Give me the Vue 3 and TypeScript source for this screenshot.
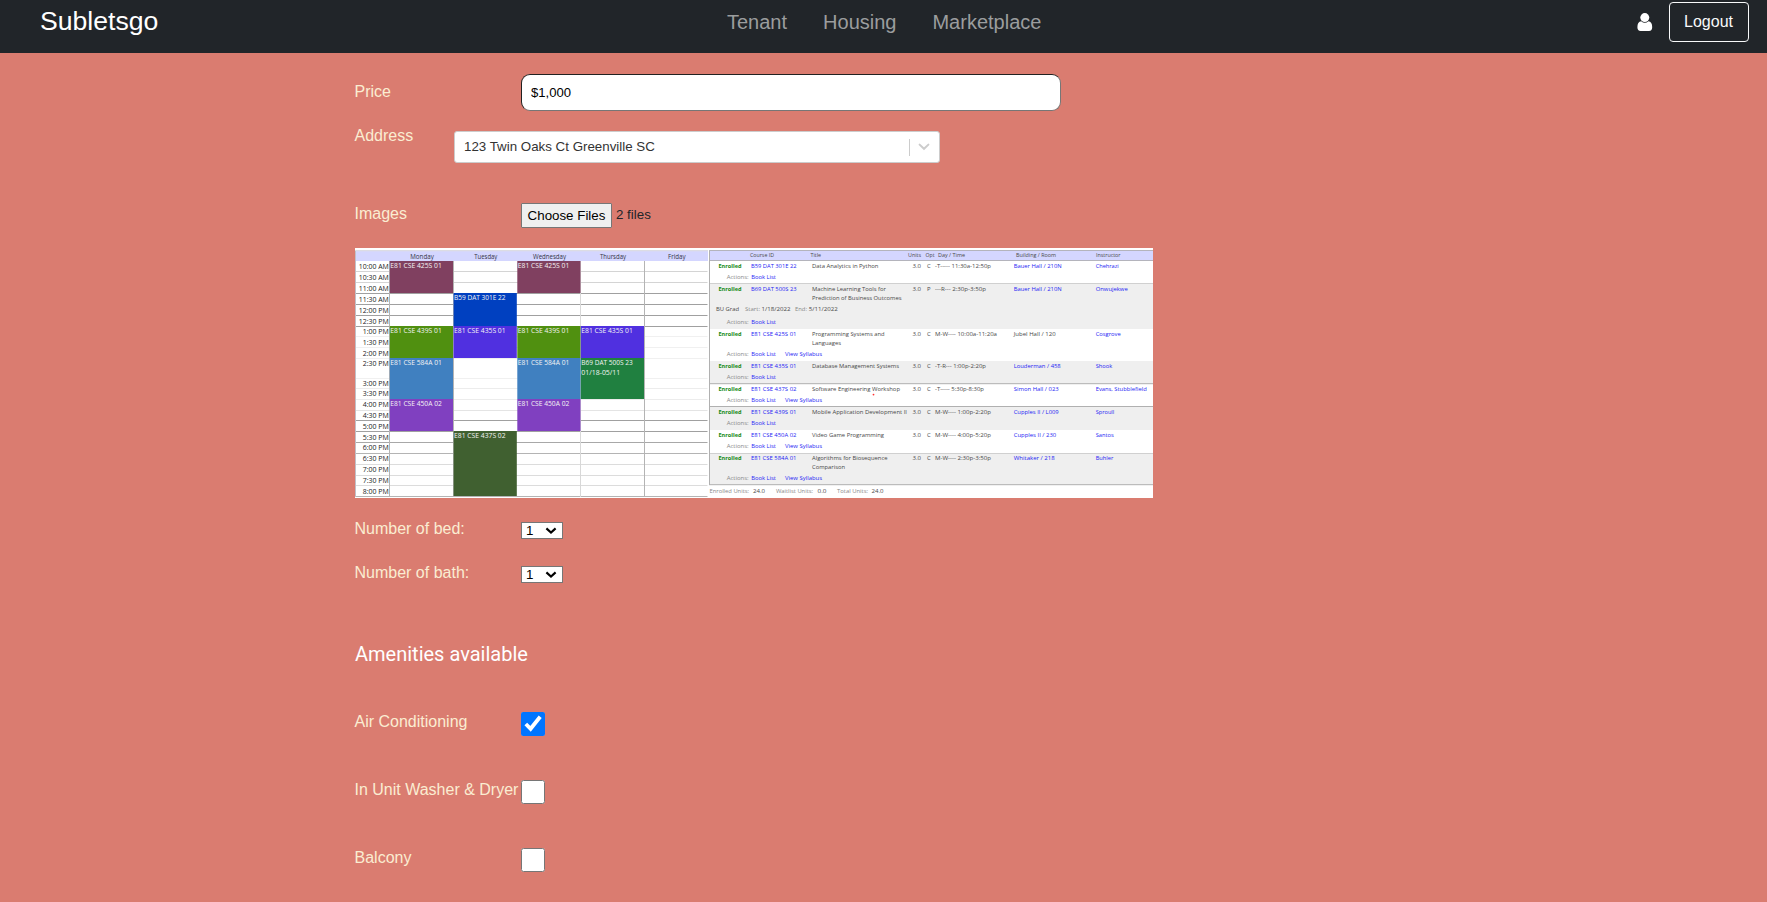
<script setup lang="ts">
import { ref } from 'vue'

interface Block { day: number; top: number; bottom: number; color: string; lines: string[] }
interface Course {
  top: number; height: number; base: number; actions: number
  id: string; title: string[]; opt: string; time: string; timeW: number
  room: string; roomW: number; plain?: boolean; who: string; whoW: number; syllabus: boolean
}

const price = ref('$1,000')
const rooms = ref([
  { name: 'Number of bed:', count: '1' },
  { name: 'Number of bath:', count: '1' },
])
const counts = ['1', '2', '3', '4']
const nav = ['Tenant', 'Housing', 'Marketplace']
const amenities = ref([
  { name: 'Air Conditioning', on: true },
  { name: 'In Unit Washer & Dryer', on: false },
  { name: 'Balcony', on: false },
])

const days = ['Monday', 'Tuesday', 'Wednesday', 'Thursday', 'Friday']
const dayWidths = [23.5, 23, 33, 26, 17.5]
const cols = [34.5, 98.3, 162, 225.5, 289.3]
const times: [string, number][] = [
  ['10:00 AM', 21.3], ['10:30 AM', 32.3], ['11:00 AM', 43.3], ['11:30 AM', 54], ['12:00 PM', 65],
  ['12:30 PM', 76], ['1:00 PM', 86.3], ['1:30 PM', 97.3], ['2:00 PM', 108.3], ['2:30 PM', 118.5],
  ['3:00 PM', 137.8], ['3:30 PM', 148.6], ['4:00 PM', 159.4], ['4:30 PM', 170.4], ['5:00 PM', 181.2],
  ['5:30 PM', 192], ['6:00 PM', 202.5], ['6:30 PM', 213.3], ['7:00 PM', 224.3], ['7:30 PM', 235.3], ['8:00 PM', 246],
]
const rules: [number, string][] = [
  [23.5, '#d4d4d4'], [34.5, '#d4d4d4'], [45.5, '#a0a0a0'], [56.5, '#a0a0a0'], [67.5, '#a0a0a0'], [78.5, '#a0a0a0'],
  [88.5, '#f0f0f0'], [99.5, '#f0f0f0'], [110.5, '#f0f0f0'], [130.5, '#f0f0f0'], [140.5, '#ececec'], [151.5, '#ececec'],
  [162.5, '#e4e4e4'], [172.5, '#a0a0a0'], [183.5, '#a0a0a0'], [194.5, '#a8a8a8'], [205.5, '#b4b4b4'],
  [216.5, '#dcdcdc'], [227.5, '#dcdcdc'], [237.5, '#dcdcdc'], [248.5, '#b4b4b4'],
]
const mw = (day: number): Block[] => [
  { day, top: 13, bottom: 45, color: '#804060', lines: ['E81 CSE 425S 01'] },
  { day, top: 78, bottom: 110, color: '#509010', lines: ['E81 CSE 439S 01'] },
  { day, top: 110, bottom: 151, color: '#4080c0', lines: ['E81 CSE 584A 01'] },
  { day, top: 151, bottom: 183, color: '#8040c0', lines: ['E81 CSE 450A 02'] },
]
const blocks: Block[] = [
  ...mw(0), ...mw(2),
  { day: 1, top: 45, bottom: 78, color: '#0040c0', lines: ['B59 DAT 301E 22'] },
  { day: 1, top: 78, bottom: 110, color: '#5030e0', lines: ['E81 CSE 435S 01'] },
  { day: 1, top: 183, bottom: 248, color: '#406030', lines: ['E81 CSE 437S 02'] },
  { day: 3, top: 78, bottom: 110, color: '#5030e0', lines: ['E81 CSE 435S 01'] },
  { day: 3, top: 110, bottom: 151, color: '#208040', lines: ['B69 DAT 500S 23', '01/18-05/11'] },
]

const courses: Course[] = [
  { top: 13, height: 22, base: 20.2, actions: 31.2, id: 'B59 DAT 301E 22', title: ['Data Analytics in Python'], opt: 'C', time: '-T----- 11:30a-12:50p', timeW: 56, room: 'Bauer Hall / 210N', roomW: 48, who: 'Chehrazi', whoW: 23, syllabus: false },
  { top: 35, height: 46, base: 43.2, actions: 75.7, id: 'B69 DAT 500S 23', title: ['Machine Learning Tools for', 'Prediction of Business Outcomes'], opt: 'P', time: '---R--- 2:30p-3:50p', timeW: 51, room: 'Bauer Hall / 210N', roomW: 48, who: 'Onwujekwe', whoW: 32, syllabus: false },
  { top: 81, height: 32, base: 87.7, actions: 108, id: 'E81 CSE 425S 01', title: ['Programming Systems and', 'Languages'], opt: 'C', time: 'M-W---- 10:00a-11:20a', timeW: 62, room: 'Jubel Hall / 120', roomW: 42, plain: true, who: 'Cosgrove', whoW: 25, syllabus: true },
  { top: 113, height: 23, base: 120, actions: 131, id: 'E81 CSE 435S 01', title: ['Database Management Systems'], opt: 'C', time: '-T-R--- 1:00p-2:20p', timeW: 51, room: 'Louderman / 458', roomW: 47, who: 'Shook', whoW: 16.5, syllabus: false },
  { top: 136, height: 22, base: 143, actions: 154.2, id: 'E81 CSE 437S 02', title: ['Software Engineering Workshop'], opt: 'C', time: '-T----- 5:30p-8:30p', timeW: 49, room: 'Simon Hall / 023', roomW: 45, who: 'Evans, Stubblefield', whoW: 51, syllabus: true },
  { top: 158, height: 24, base: 166, actions: 177, id: 'E81 CSE 439S 01', title: ['Mobile Application Development II'], opt: 'C', time: 'M-W---- 1:00p-2:20p', timeW: 56, room: 'Cupples II / L009', roomW: 45, who: 'Sproull', whoW: 18.5, syllabus: false },
  { top: 182, height: 23, base: 188.6, actions: 200, id: 'E81 CSE 450A 02', title: ['Video Game Programming'], opt: 'C', time: 'M-W---- 4:00p-5:20p', timeW: 56, room: 'Cupples II / 230', roomW: 42.5, who: 'Santos', whoW: 18, syllabus: true },
  { top: 205, height: 32, base: 211.8, actions: 232.2, id: 'E81 CSE 584A 01', title: ['Algorithms for Biosequence', 'Comparison'], opt: 'C', time: 'M-W---- 2:30p-3:50p', timeW: 56, room: 'Whitaker / 218', roomW: 41, who: 'Buhler', whoW: 17.5, syllabus: true },
]
const titleWidths: Record<string, number> = {
  'Data Analytics in Python': 66.5, 'Machine Learning Tools for': 74, 'Prediction of Business Outcomes': 89.5,
  'Programming Systems and': 72.5, 'Languages': 29, 'Database Management Systems': 87,
  'Software Engineering Workshop': 88, 'Mobile Application Development II': 95,
  'Video Game Programming': 72, 'Algorithms for Biosequence': 75.5, 'Comparison': 33,
}
const heads: [string, number, number][] = [
  ['Course ID', 41, 24], ['Title', 101.5, 10.5], ['Units', 199, 13], ['Opt', 216.5, 9],
  ['Day / Time', 229, 27], ['Building / Room', 307, 40], ['Instructor', 387, 24.5],
]
const footer: [string, number, number, boolean][] = [
  ['Enrolled Units:', 0.5, 39.5, false], ['24.0', 44, 12, true], ['Waitlist Units:', 67, 37, false],
  ['0.0', 108.5, 9, true], ['Total Units:', 128, 31, false], ['24.0', 162.5, 12, true],
]
</script>

<template>
  <div class="page">
    <header class="bar">
      <a class="brand">Subletsgo</a>
      <nav class="links"><a v-for="item in nav" :key="item">{{ item }}</a></nav>
      <div class="account">
        <svg class="user" width="16" height="18" viewBox="0 0 16 18">
          <path d="M4.2 8.3Q.4 8.8.4 14.3Q.4 18 3.6 18H12Q15.2 18 15.2 14.3Q15.2 8.8 11.4 8.3Q7.8 11.4 4.2 8.3Z" fill="#fff" />
          <circle cx="7.8" cy="4.6" r="4.5" fill="#fff" />
        </svg>
        <button class="logout">Logout</button>
      </div>
    </header>

    <main class="form">
      <div class="row price">
        <label>Price</label>
        <input v-model="price" class="field" type="text" />
      </div>
      <div class="row address">
        <label>Address</label>
        <div class="combo">
          <span class="value">123 Twin Oaks Ct Greenville SC</span>
          <span class="sep"></span>
          <svg class="chev" width="12" height="8" viewBox="0 0 12 8"><path d="M1.6 1.6L6 5.8L10.4 1.6" fill="none" stroke="#ccc" stroke-width="2" stroke-linecap="round" /></svg>
        </div>
      </div>
      <div class="row files">
        <label>Images</label>
        <button class="choose">Choose Files</button>
        <span class="count">2 files</span>
      </div>

      <div class="gallery">
        <svg class="shot" width="354" height="250" viewBox="0 0 354 250">
          <rect width="354" height="250" fill="#fff" />
          <rect y="2" width="353" height="11" fill="#d4d6ff" />
          <rect y="2" width="353" height="1.3" fill="#dcdce4" />
          <line v-for="[y, c] in rules" :key="y" x1="1" x2="352.5" :y1="y" :y2="y" :stroke="c" />
          <line x1="34.5" x2="34.5" y1="13" y2="249" stroke="#b4b4b4" />
          <line x1="98.5" x2="98.5" y1="13" y2="249" stroke="#b4b4b4" />
          <line x1="225.5" x2="225.5" y1="13" y2="249" stroke="#d8d8d8" />
          <line x1="289.5" x2="289.5" y1="13" y2="249" stroke="#b4b4b4" />
          <line x1=".5" x2=".5" y1="3" y2="249" stroke="#c0c0c8" />
          <text v-for="(d, i) in days" :key="d" class="head" :x="cols[i] + 32.5" y="10.6" text-anchor="middle" :textLength="dayWidths[i]" lengthAdjust="spacingAndGlyphs">{{ d }}</text>
          <text v-for="([t, y], i) in times" :key="t" class="time" x="33.8" :y="y - 0.2" text-anchor="end" :textLength="i < 6 ? 30 : 26" lengthAdjust="spacingAndGlyphs">{{ t }}</text>
          <g v-for="(b, i) in blocks" :key="i">
            <rect :x="cols[b.day] + .3" :y="b.top" width="63.2" :height="b.bottom - b.top" :fill="b.color" />
            <text v-for="(l, k) in b.lines" :key="k" class="event" :x="cols[b.day] + .8" :y="b.top + 7.4 + k * 9.2" :textLength="k ? 39 : 51.5" lengthAdjust="spacingAndGlyphs">{{ l }}</text>
          </g>
        </svg>
        <svg class="shot" width="444" height="250" viewBox="0 0 444 250">
          <rect width="444" height="250" fill="#fff" />
          <rect y="2" width="444" height="11" fill="#d4d6ff" />
          <path d="M0 2.5H444M0 12.5H444" stroke="#b4b4bc" />
          <g v-for="(c, i) in courses" :key="c.id + i">
            <rect v-if="i % 2" x="1" :y="c.top" width="443" :height="c.height" fill="#efefef" />
            <text class="cell ok" x="9.5" :y="c.base" textLength="23" lengthAdjust="spacingAndGlyphs">Enrolled</text>
            <text class="cell link" x="42" :y="c.base" textLength="45.5" lengthAdjust="spacingAndGlyphs">{{ c.id }}</text>
            <text v-for="(t, k) in c.title" :key="t" class="cell" x="103" :y="c.base + k * 9" :textLength="titleWidths[t]" lengthAdjust="spacingAndGlyphs">{{ t }}</text>
            <text class="cell" x="203.5" :y="c.base" textLength="8.5" lengthAdjust="spacingAndGlyphs">3.0</text>
            <text class="cell" x="218" :y="c.base">{{ c.opt }}</text>
            <text class="cell" x="226" :y="c.base" :textLength="c.timeW" lengthAdjust="spacingAndGlyphs">{{ c.time }}</text>
            <text class="cell" :class="{ link: !c.plain }" x="304.7" :y="c.base" :textLength="c.roomW" lengthAdjust="spacingAndGlyphs">{{ c.room }}</text>
            <text class="cell link" x="386.7" :y="c.base" :textLength="c.whoW" lengthAdjust="spacingAndGlyphs">{{ c.who }}</text>
            <text class="cell soft" x="17.7" :y="c.actions" textLength="22" lengthAdjust="spacingAndGlyphs">Actions:</text>
            <text class="cell link" x="42.3" :y="c.actions" textLength="24.5" lengthAdjust="spacingAndGlyphs">Book List</text>
            <text v-if="c.syllabus" class="cell link" x="76" :y="c.actions" textLength="37" lengthAdjust="spacingAndGlyphs">View Syllabus</text>
          </g>
          <text class="cell" x="7" y="63.4" textLength="23" lengthAdjust="spacingAndGlyphs">BU Grad</text>
          <text class="cell soft" x="36" y="63.4" textLength="15" lengthAdjust="spacingAndGlyphs">Start:</text>
          <text class="cell" x="52.5" y="63.4" textLength="29" lengthAdjust="spacingAndGlyphs">1/18/2022</text>
          <text class="cell soft" x="86" y="63.4" textLength="12" lengthAdjust="spacingAndGlyphs">End:</text>
          <text class="cell" x="99.7" y="63.4" textLength="29" lengthAdjust="spacingAndGlyphs">5/11/2022</text>
          <circle cx="164.5" cy="146.6" r=".9" fill="#f33" />
          <path d="M0 35.5H444M0 205.5H444" stroke="#d0d0d0" />
          <path d="M0 135.7H444M0 158.5H444M0 236.7H444M.5 3V237" stroke="#b0b0b0" />
          <text v-for="[t, x, w] in heads" :key="t" class="cell" :x="x" y="9.2" :textLength="w" lengthAdjust="spacingAndGlyphs">{{ t }}</text>
          <text v-for="[t, x, w, dark] in footer" :key="x" class="cell" :class="{ soft: !dark }" :x="x" y="245.3" :textLength="w" lengthAdjust="spacingAndGlyphs">{{ t }}</text>
        </svg>
      </div>

      <div v-for="r in rooms" :key="r.name" class="row rooms">
        <label>{{ r.name }}</label>
        <div class="pick">
          <select v-model="r.count"><option v-for="n in counts" :key="n">{{ n }}</option></select>
          <svg class="arrow" width="12" height="8" viewBox="0 0 12 8"><path d="M1.4 1.4L6 5.6L10.6 1.4" fill="none" stroke="#000" stroke-width="2.1" /></svg>
        </div>
      </div>

      <h2>Amenities available</h2>
      <div v-for="a in amenities" :key="a.name" class="row amenity">
        <label>{{ a.name }}</label>
        <input v-model="a.on" type="checkbox" />
      </div>
    </main>
  </div>
</template>

<style>
body { margin: 0; background: #da7c70; overflow: hidden; }
</style>

<style scoped>
.page { height: 902px; overflow: hidden; background: #da7c70; font-family: "Liberation Sans", Arial, sans-serif; font-size: 16px; color: #212529; }
.page * { box-sizing: border-box; }
.bar { height: 53px; background: #212529; display: grid; grid-template-columns: 726px 1fr auto; align-items: start; padding-right: 18px; }
.brand { padding: 6px 0 0 40px; font-size: 26.6px; line-height: 30px; color: #fff; }
.links { display: flex; gap: 36px; padding: 10px 0 0 1px; font-size: 20px; line-height: 24px; color: #9b9d9e; }
.account { display: flex; padding-top: 2px; }
.user { margin: 11px 16px 0 0; }
.logout { width: 80px; height: 40px; padding: 0 1px 1px 0; border: 1px solid #f8f9fa; border-radius: 4px; background: transparent; color: #f8f9fa; font: 16px "Liberation Sans", Arial, sans-serif; }
.form { padding: 21px 0 0 354px; }
.row { display: flex; align-items: flex-start; }
label { width: 167px; flex: none; padding-left: .5px; line-height: 24px; white-space: nowrap; color: #faedd2; }
.price { height: 44px; }
.price label { padding-top: 6px; }
.field { width: 540px; height: 37px; border: 1px solid #767676; border-top-color: #212121; border-left-color: #212121; border-radius: 9px; padding: 0 9px 1px; background: #fff; font: 13.1px "Liberation Sans", Arial, sans-serif; color: #000; }
.address { height: 79px; }
.address label { width: 100px; padding-top: 6px; }
.combo { width: 486px; height: 32px; margin-top: 13px; display: flex; align-items: center; border: 1px solid #ccc; border-radius: 3px; background: #fff; font-size: 13.33px; color: #333; }
.value { flex: 1; padding: 0 0 2px 9px; }
.sep { width: 1px; height: 17px; background: #ccc; }
.chev { margin: 0 9px 0 8px; }
.files { height: 51px; padding-top: 6px; }
.files label { line-height: 22px; }
.choose { width: 91px; height: 25px; padding: 0; border: 1px solid #767676; background: #efefef; color: #000; font: 13.33px "Liberation Sans", Arial, sans-serif; white-space: nowrap; border-radius: 1px; }
.count { padding-left: 4px; font-size: 13.33px; line-height: 23px; }
.gallery { display: flex; width: 798px; height: 250px; margin-left: 1px; overflow: hidden; background: #fff; }
.shot { display: block; flex: none; font-family: "Open Sans", sans-serif; }
.head { font-size: 6.3px; fill: #333345; }
.time { font-size: 6.8px; fill: #222; }
.event { font-size: 6.6px; fill: #f4f4f4; }
.cell { font-size: 5.9px; fill: #484848; }
.cell.soft { fill: #888; }
.cell.link { fill: #2424f4; }
.cell.ok { fill: #168a16; font-weight: 700; }
.rooms { height: 44px; padding-top: 24px; }
.rooms label { margin-top: -5px; }
.pick { position: relative; width: 42px; height: 17px; }
select { display: block; width: 42px; height: 17px; margin: 0; padding: 0 0 0 4px; appearance: none; border: 1px solid #767676; border-radius: 0; background: #fff; color: #000; font: 13.33px/15px "Liberation Sans", Arial, sans-serif; }
.arrow { position: absolute; right: 6px; top: 5px; pointer-events: none; }
h2 { margin: 56px 0 0 1px; font: 400 20px/24px Roboto, sans-serif; color: #fff; }
.amenity { height: 68px; }
h2 + .amenity { margin-top: 46px; }
.amenity label { margin-top: -2px; }
.amenity input { width: 24px; height: 24px; margin: 0; }
</style>
